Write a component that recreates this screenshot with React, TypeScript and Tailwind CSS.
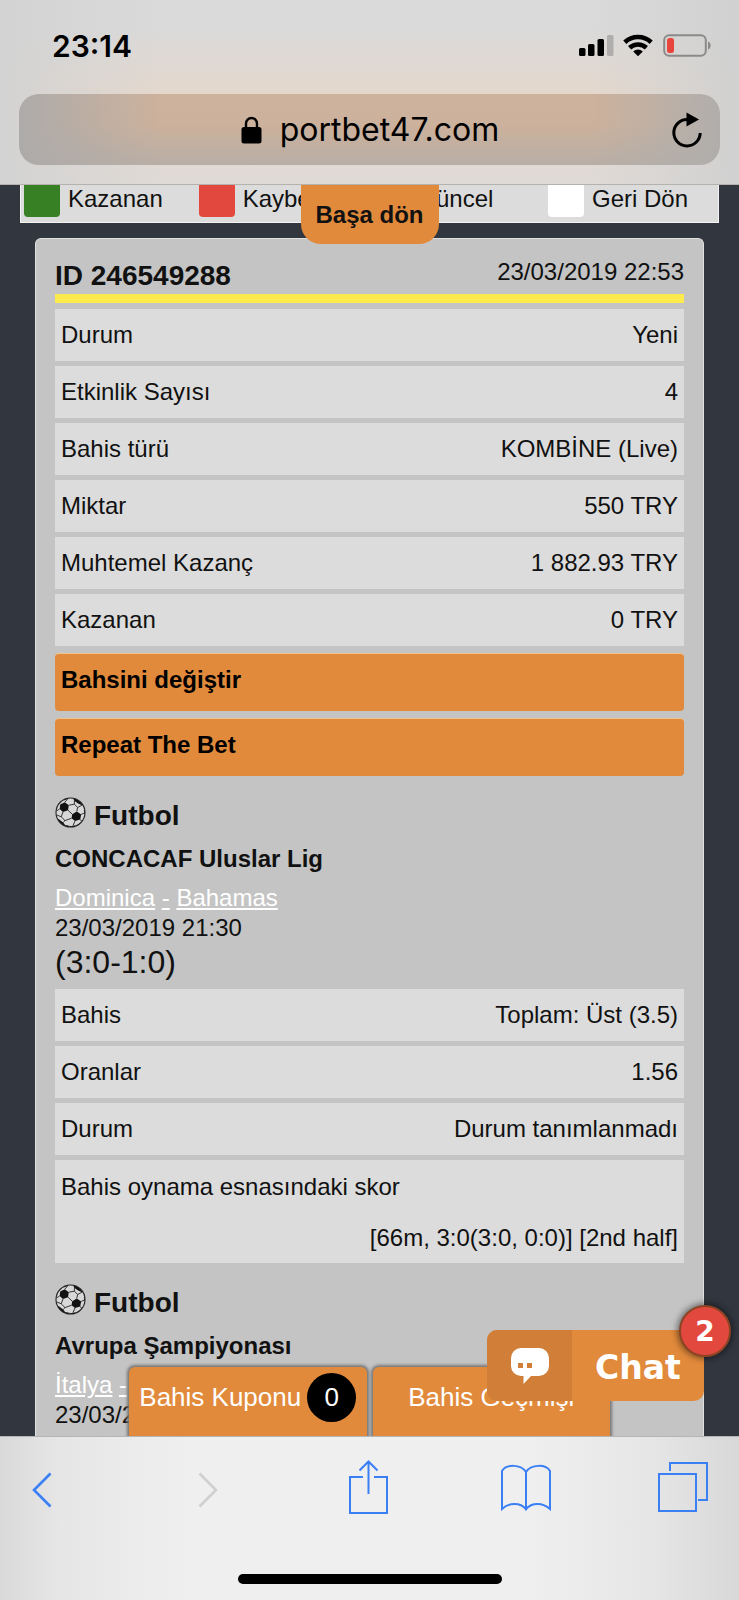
import type { ReactNode } from 'react';

const legend = [
  { label: 'Kazanan', swatch: 'bg-[#378024]' },
  { label: 'Kaybeden', swatch: 'bg-[#e2483d]' },
  { label: 'Güncel', swatch: 'bg-[#fdea4c]' },
  { label: 'Geri Dön', swatch: 'bg-white' },
];

const summary = [
  { label: 'Durum', value: 'Yeni' },
  { label: 'Etkinlik Sayısı', value: '4' },
  { label: 'Bahis türü', value: 'KOMBİNE (Live)' },
  { label: 'Miktar', value: '550 TRY' },
  { label: 'Muhtemel Kazanç', value: '1 882.93 TRY' },
  { label: 'Kazanan', value: '0 TRY' },
];

const firstEvent = [
  { label: 'Bahis', value: 'Toplam: Üst (3.5)' },
  { label: 'Oranlar', value: '1.56' },
  { label: 'Durum', value: 'Durum tanımlanmadı' },
];

function StatusIcons() {
  return (
    <svg width="132" height="24" viewBox="0 0 132 24" aria-hidden="true">
      <rect x="0" y="14" width="6.500" height="8" rx="1.500" />
      <rect x="9" y="10" width="6.500" height="12" rx="1.500" />
      <rect x="18.500" y="5" width="6.500" height="17" rx="1.500" />
      <rect x="28" y="1" width="6.500" height="21" rx="1.500" fill="#b0aeac" />
      <g fill="none" stroke="#000" strokeWidth="4.600">
        <path d="M45.800 8.200a19.500 19.500 0 0 1 26.400 0" />
        <path d="M50.600 13.800a12.400 12.400 0 0 1 16.800 0" />
      </g>
      <path d="M59 22.200l-4.800-4.800a7.200 7.200 0 0 1 9.600 0z" />
      <rect x="85.200" y="1.200" width="41.600" height="20.600" rx="5" fill="none" stroke="#8b8a89" strokeWidth="2" />
      <rect x="88" y="4" width="7" height="15" rx="2.500" fill="#e8453c" />
      <path d="M129 7.500c3.500 1 3.500 7 0 8z" fill="#8b8a89" />
    </svg>
  );
}

function BallIcon() {
  return (
    <svg width="31" height="31" viewBox="0 0 31 31" aria-hidden="true" className="shrink-0">
      <defs>
        <clipPath id="ball">
          <circle cx="15.500" cy="15.500" r="14.500" />
        </clipPath>
      </defs>
      <circle cx="15.500" cy="15.500" r="14.500" fill="#d8d8d8" />
      <g clipPath="url(#ball)" fill="#111">
        <path d="M5.200 7.400l4.600-2.200 4 3-.8 5-5 1.800-3.400-3z" />
        <path d="M17.200 17.200l4.600-2.800 4.400 3-1 5-5.200 1.600-3.400-2.800z" />
        <path d="M18 1l7 2.500 3 5-4.500-1.800-4.300-3z" />
        <path d="M3.500 22l4.700 3.400 3 4-5-1-4-6z" />
        <path d="M14.500 29.200l5.500-.8-1 2.600h-4z" />
        <path d="M28.800 13l2.200.5v4l-1.500-.5z" />
        <path d="M7 3.200l4-2.200 2.500.6-4 1.600z" />
        <g fill="none" stroke="#222" strokeWidth="0.900">
          <path d="M9.800 5.200L13 1.600M13.800 8.200l5.600-1V3.700M19.400 7.200l3.200 3.300-.8 3.900M22.600 10.500l4.600-2.500M13 13.200l4.200 4M8 15l-1.800 4.800 3.800 3.800 6.600-2.400M6.200 19.800L2 18M10 23.600l-1.800 1.800M4.600 12l-3.200 2M26.200 17.400l3.400-1.400M25.200 22.400l1.500 2M20 24l-2 4.600M10.500 28.500l4 .7" />
        </g>
      </g>
      <circle cx="15.500" cy="15.500" r="14.500" fill="none" stroke="#222" strokeWidth="1.100" />
    </svg>
  );
}

function Row({ label, value }: { label: string; value: string }) {
  return (
    <div className="flex flex-wrap justify-between bg-[#dcdcdc] px-[6px] leading-[52px]">
      <dt>{label}</dt>
      <dd>{value}</dd>
    </div>
  );
}

type EventProps = {
  league: string;
  home: string;
  away?: string;
  date: string;
  score?: string;
  children?: ReactNode;
};

function BetEvent({ league, home, away, date, score, children }: EventProps) {
  return (
    <section className="mt-[21px]">
      <h2 className="flex h-9 items-start gap-2 text-[28px] font-bold leading-[38px]">
        <BallIcon />
        Futbol
      </h2>
      <h3 className="mt-3 font-bold leading-7">{league}</h3>
      <div className="mt-[10px] leading-[30px] text-white">
        <a href="#home" className="underline">{home}</a>{' '}
        <span className="underline">-</span>{' '}
        {away && <a href="#away" className="underline">{away}</a>}
      </div>
      <p className="leading-[30px]">{date}</p>
      {score && <p className="text-[32px] leading-[38px]">{score}</p>}
      {children}
    </section>
  );
}

function BrowserHeader() {
  return (
    <header className="shrink-0 border-b border-[#b5b2ae] bg-[linear-gradient(to_right,#d3d3d3,transparent_22%,transparent_80%,#d1d1d1),linear-gradient(to_bottom,#dadada_15%,#e4d8cd_50%,#dfdad6)] px-[19px] pb-[19px] pt-[34px] font-['Inter',sans-serif] text-black">
      <div className="flex h-6 items-center justify-between pl-[33px] pr-[9px]">
        <span className="text-[30px] font-semibold leading-6">23:14</span>
        <StatusIcons />
      </div>
      <div className="mt-9 flex h-[71px] items-center rounded-[20px] bg-[linear-gradient(to_right,#adabaa,transparent_20%,transparent_82%,#b0aeac),linear-gradient(to_bottom,#cdb29d,#ccb19c_45%,#b8aea6)] pl-[50px] pr-[17px]">
        <div className="flex flex-1 items-center justify-center gap-[18px]">
          <svg width="21" height="28" viewBox="0 0 21 28" aria-hidden="true">
            <path d="M5 13V7.500a5.500 5.500 0 0 1 11 0V13" fill="none" stroke="#000" strokeWidth="2.400" />
            <rect x="0.500" y="11" width="20" height="16.500" rx="2.500" />
          </svg>
          <span className="text-[32px] leading-10">portbet47.com</span>
        </div>
        <button type="button" aria-label="Yenile">
          <svg width="32" height="36" viewBox="0 0 32 36">
            <path d="M29.200 21A13.200 13.200 0 1 1 16 7.500" fill="none" stroke="#000" strokeWidth="3" />
            <path d="M15.500 0.500l12.500 7-12.500 7z" />
          </svg>
        </button>
      </div>
    </header>
  );
}

function BrowserToolbar() {
  return (
    <footer className="shrink-0 border-t border-[#b5b5b5] bg-[linear-gradient(to_right,#d9d9d9,#e6e6e6_8%,#efefef_25%,#efefef_72%,#e6e6e6_88%,#d8d8d8)] pb-4 pt-[23px]">
      <div className="flex h-[54px] items-center justify-between pl-[10px] pr-[31px]">
        <button type="button" aria-label="Geri" className="flex w-16 justify-center pt-[6px]">
          <svg width="20" height="36" viewBox="0 0 20 36" fill="none" stroke="#3b7ff5" strokeWidth="2.600">
            <path d="M18.500 1.500L2 18l16.500 16.500" />
          </svg>
        </button>
        <button type="button" aria-label="İleri" className="flex w-[68px] justify-center pt-[6px]" disabled>
          <svg width="20" height="36" viewBox="0 0 20 36" fill="none" stroke="#d0d0d0" strokeWidth="2.600">
            <path d="M1.500 1.500L18 18 1.500 34.500" />
          </svg>
        </button>
        <button type="button" aria-label="Paylaş" className="flex w-[52px] justify-center">
          <svg width="39" height="54" viewBox="0 0 39 54" fill="none" stroke="#3b7ff5" strokeWidth="2">
            <path d="M14 17H1v36h37V17H25M19.500 34V2M10.500 10.500l9-9 9 9" />
          </svg>
        </button>
        <button type="button" aria-label="Yer imleri" className="flex w-16 justify-center pt-[2px]">
          <svg width="50" height="48" viewBox="0 0 50 48" fill="none" stroke="#3b7ff5" strokeWidth="2">
            <path d="M25 46.500V8C20 0 5 0 1 7v38c7-6.500 18-7 24 0 6-7 17-6.500 24 0V7C45 0 30 0 25 8" />
          </svg>
        </button>
        <button type="button" aria-label="Sekmeler" className="flex w-[50px] justify-center">
          <svg width="50" height="50" viewBox="0 0 50 50" fill="none" stroke="#3b7ff5" strokeWidth="2">
            <path d="M1 12h37v37H1zM12 9V1h37v37h-9" />
          </svg>
        </button>
      </div>
      <div className="mx-auto mt-[60px] h-[10px] w-[264px] rounded-full bg-black" />
    </footer>
  );
}

export default function App() {
  return (
    <div className="flex h-screen flex-col bg-[#32363f] font-['Liberation_Sans',Arial,sans-serif] text-[24px] text-[#111]">
      <BrowserHeader />

      <main className="relative min-h-0 flex-1 overflow-hidden">
        {/* Legend */}
        <ul className="mx-5 grid h-[38px] grid-cols-[1fr_1fr_1fr_170px] border border-t-0 border-[#f2f2f2] bg-[#dcdcdc] pl-[3px]">
          {legend.map(({ label, swatch }) => (
            <li key={label} className="flex items-start gap-2">
              <span className={`h-8 w-9 shrink-0 rounded-b-[4px] ${swatch}`} />
              <span className="leading-7">{label}</span>
            </li>
          ))}
        </ul>

        {/* Bet card */}
        <article className="mx-[35px] mt-[15px] rounded-t-[6px] border border-b-0 border-[#e0e0e0] bg-[#c4c4c4] px-[19px] pb-10 pt-[19px]">
          <div className="flex items-start justify-between border-b-[9px] border-[#fdea4c]">
            <h1 className="text-[28px] font-bold leading-9">ID 246549288</h1>
            <time className="leading-7">23/03/2019 22:53</time>
          </div>
          <dl className="mt-[6px] space-y-[5px]">
            {summary.map((row) => (
              <Row key={row.label} {...row} />
            ))}
          </dl>
          <div className="mt-[7px] space-y-[7px]">
            {['Bahsini değiştir', 'Repeat The Bet'].map((label) => (
              <button
                key={label}
                type="button"
                className="block w-full rounded-[4px] border-t border-[#efc48f] bg-[#e28a3b] px-[6px] pb-[5px] text-left font-bold leading-[52px] text-black"
              >
                {label}
              </button>
            ))}
          </div>

          <BetEvent
            league="CONCACAF Uluslar Lig"
            home="Dominica"
            away="Bahamas"
            date="23/03/2019 21:30"
            score="(3:0-1:0)"
          >
            <dl className="mt-2 space-y-[5px]">
              {firstEvent.map((row) => (
                <Row key={row.label} {...row} />
              ))}
              <div className="bg-[#dcdcdc] px-[6px] pt-px leading-[51px]">
                <dt>Bahis oynama esnasındaki skor</dt>
                <dd className="text-right">[66m, 3:0(3:0, 0:0)] [2nd half]</dd>
              </div>
            </dl>
          </BetEvent>

          <BetEvent league="Avrupa Şampiyonası" home="İtalya" date="23/03/2019" />
        </article>

        {/* Back to top */}
        <button
          type="button"
          className="absolute left-1/2 top-0 h-[59px] w-[138px] -translate-x-1/2 rounded-b-[20px] bg-[#e28a3b] font-bold"
        >
          Başa dön
        </button>

        {/* Coupon tabs */}
        <nav className="absolute inset-x-[129px] bottom-0 flex h-[69px] gap-[6px] text-[26px] text-white">
          <a
            href="#coupon"
            className="flex flex-1 items-start justify-center gap-[6px] rounded-t-[6px] bg-[#e28a3b] pt-[6px] leading-[49px] shadow-[0_0_3px_2px_#777]"
          >
            Bahis Kuponu
            <span className="size-[49px] shrink-0 rounded-full bg-black text-center">0</span>
          </a>
          <a
            href="#history"
            className="flex flex-1 items-start justify-center rounded-t-[6px] bg-[#e28a3b] pt-[6px] leading-[49px] shadow-[0_0_3px_2px_#777]"
          >
            Bahis Geçmişi
          </a>
        </nav>

        {/* Chat launcher */}
        <button
          type="button"
          className="absolute bottom-[35px] right-[35px] flex h-[71px] w-[217px] rounded-[10px] bg-[#e28a3b] font-['DejaVu_Sans',Verdana,sans-serif] font-bold text-white"
        >
          <span className="flex h-full w-[85px] items-center justify-center rounded-l-[10px] bg-[#d07e38]">
            <svg width="38" height="36" viewBox="0 0 38 36" aria-hidden="true">
              <path
                d="M10 0h18a10 10 0 0 1 10 10v8a10 10 0 0 1-10 10h-8l-7.500 8V28H10A10 10 0 0 1 0 18v-8A10 10 0 0 1 10 0z"
                fill="#fff"
              />
              <path d="M7 15h5v5H7zM16 15h5v5h-5z" fill="#d07e38" />
            </svg>
          </span>
          <span className="flex-1 text-center text-[33px] leading-[75px]">Chat</span>
          <span className="absolute -right-[27px] -top-[25px] size-[52px] rounded-full border-2 border-[#8c4424] bg-[#e2483d] text-center text-[28px] leading-[50px] shadow-[0_0_6px_2px_rgba(0,0,0,0.45)]">
            2
          </span>
        </button>
      </main>

      <BrowserToolbar />
    </div>
  );
}
